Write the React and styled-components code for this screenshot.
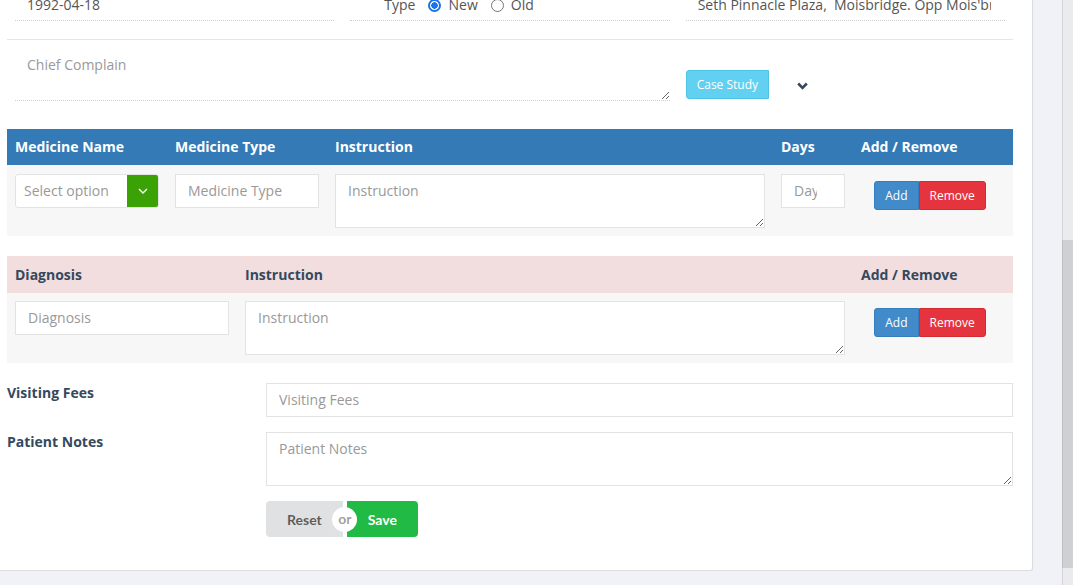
import styled, { createGlobalStyle } from "styled-components";

const GlobalStyle = createGlobalStyle`
    html, body {
        margin: 0;
        padding: 0;
        background: #f0f2f7;
        overflow: hidden;
        font-family: "Open Sans", "Liberation Sans", sans-serif;
    }
    * { box-sizing: border-box; }
`;

export default function App() {
    return (
        <>
            <GlobalStyle />
            <Viewport>
                <Main>
                    <Card>
                        <TopRow>
                            <Col>
                                <LineField>1992-04-18</LineField>
                            </Col>
                            <Col>
                                <LineField $indent="34px">
                                    <span>Type</span>
                                    <Radio $checked />
                                    <span>New</span>
                                    <Radio />
                                    <span>Old</span>
                                </LineField>
                            </Col>
                            <Col>
                                <LineField>
                                    <FieldText>Seth Pinnacle Plaza,&nbsp; Moisbridge. Opp Mois'bridge Road</FieldText>
                                </LineField>
                            </Col>
                        </TopRow>

                        <ComplainRow>
                            <ComplainCol>
                                <LineArea placeholder="Chief Complain" />
                            </ComplainCol>
                            <CaseCol>
                                <CaseButton>Case Study</CaseButton>
                                <DropToggle>
                                    <svg width="11" height="8" viewBox="0 0 11 8">
                                        <path d="M1.2 1.5 L5.5 5.8 L9.8 1.5" fill="none" stroke="#34495e" strokeWidth="2.6" />
                                    </svg>
                                </DropToggle>
                            </CaseCol>
                        </ComplainRow>

                        <Table>
                            <colgroup>
                                <col style={{ width: 160 }} />
                                <col style={{ width: 160 }} />
                                <col />
                                <col style={{ width: 80 }} />
                                <col style={{ width: 160 }} />
                            </colgroup>
                            <thead>
                                <HeadRow $tone="blue">
                                    <th>Medicine Name</th>
                                    <th>Medicine Type</th>
                                    <th>Instruction</th>
                                    <th>Days</th>
                                    <th>Add / Remove</th>
                                </HeadRow>
                            </thead>
                            <tbody>
                                <BodyRow $top="9px">
                                    <td>
                                        <SelectBox>
                                            <SelectText>Select option</SelectText>
                                            <SelectArrow>
                                                <svg width="10" height="6" viewBox="0 0 10 6">
                                                    <path d="M1 1 L5 5 L9 1" fill="none" stroke="#fff" strokeWidth="1.4" />
                                                </svg>
                                            </SelectArrow>
                                        </SelectBox>
                                    </td>
                                    <td><Input placeholder="Medicine Type" /></td>
                                    <td><Area placeholder="Instruction" /></td>
                                    <td><Input placeholder="Days" $padRight="27px" /></td>
                                    <ActionCell>
                                        <BtnGroup>
                                            <SmallBtn $kind="add">Add</SmallBtn>
                                            <SmallBtn $kind="remove">Remove</SmallBtn>
                                        </BtnGroup>
                                    </ActionCell>
                                </BodyRow>
                            </tbody>
                        </Table>

                        <Table $gap="20px">
                            <colgroup>
                                <col style={{ width: 230 }} />
                                <col />
                                <col style={{ width: 160 }} />
                            </colgroup>
                            <thead>
                                <HeadRow $tone="pink">
                                    <th>Diagnosis</th>
                                    <th>Instruction</th>
                                    <th>Add / Remove</th>
                                </HeadRow>
                            </thead>
                            <tbody>
                                <BodyRow>
                                    <td><Input placeholder="Diagnosis" /></td>
                                    <td><Area placeholder="Instruction" /></td>
                                    <ActionCell $top="15px">
                                        <BtnGroup>
                                            <SmallBtn $kind="add">Add</SmallBtn>
                                            <SmallBtn $kind="remove">Remove</SmallBtn>
                                        </BtnGroup>
                                    </ActionCell>
                                </BodyRow>
                            </tbody>
                        </Table>

                        <FormGrid>
                            <Label>Visiting Fees</Label>
                            <Input placeholder="Visiting Fees" />
                            <Label>Patient Notes</Label>
                            <Area placeholder="Patient Notes" />
                            <span />
                            <ActionBar>
                                <BigBtn $kind="reset">Reset</BigBtn>
                                <Or><span>or</span></Or>
                                <BigBtn $kind="save">Save</BigBtn>
                            </ActionBar>
                        </FormGrid>
                    </Card>
                </Main>
                <ScrollTrack>
                    <ScrollThumb />
                </ScrollTrack>
            </Viewport>
        </>
    );
}

const Viewport = styled.div`
    display: flex;
    height: 585px;
    overflow: hidden;
`;

const Main = styled.div`
    flex: 1;
    padding-right: 29px;
`;

const Card = styled.div`
    margin-top: -5px;
    background: #fff;
    border-right: 1px solid #dcdcdc;
    border-bottom: 1px solid #dcdcdc;
    border-bottom-right-radius: 3px;
    padding: 0 19px 33px 7px;
`;

const TopRow = styled.div`
    display: grid;
    grid-template-columns: repeat(3, 1fr);
    padding-bottom: 18px;
    border-bottom: 1px solid #e5e5e5;
`;

const Col = styled.div`
    padding: 0 8px;
    min-width: 0;
`;

const LineField = styled.div`
    display: flex;
    align-items: center;
    gap: 7px;
    font-size: 14px;
    line-height: 20px;
    color: #555;
    padding: 0 12px 5px ${(p) => p.$indent || "12px"};
    border-bottom: 1px dotted #cfcfcf;
    white-space: nowrap;

    span { margin-right: 2px; }
`;

const FieldText = styled.span`
    flex: 1;
    min-width: 0;
    overflow: hidden;
`;

const Radio = styled.i`
    width: 13px;
    height: 13px;
    border-radius: 50%;
    flex: none;
    margin-left: 4px;
    border: ${(p) => (p.$checked ? "2px solid #1a73e8" : "1px solid #767676")};
    background: ${(p) => (p.$checked ? "radial-gradient(circle, #1a73e8 0 3px, #fff 3.5px)" : "#fff")};
`;

const ComplainRow = styled.div`
    display: grid;
    grid-template-columns: 2fr 1fr;
    margin-top: 7px;
`;

const ComplainCol = styled.div`
    padding: 0 8px;
`;

const LineArea = styled.textarea`
    display: block;
    width: 100%;
    height: 54px;
    border: none;
    border-bottom: 1px dotted #cfcfcf;
    padding: 8px 12px 6px;
    font-family: inherit;
    font-size: 14px;
    line-height: 20px;
    color: #555;
    outline: none;

    &::placeholder { color: #999; }
`;

const CaseCol = styled.div`
    display: flex;
    align-items: center;
    padding: 23px 8px 0;
    align-self: start;
`;

const CaseButton = styled.button`
    height: 29px;
    padding: 0 10px;
    background: #62d0f1;
    border: 1px solid #4fc3e6;
    border-radius: 3px 0 0 3px;
    color: #fff;
    font-family: inherit;
    font-size: 12px;
`;

const DropToggle = styled.span`
    display: flex;
    align-items: center;
    margin-left: 28px;
    padding-top: 2px;
`;

const Table = styled.table`
    width: 100%;
    table-layout: fixed;
    border-collapse: collapse;
    margin-top: ${(p) => p.$gap || "28px"};
`;

const HeadRow = styled.tr`
    background: ${(p) => (p.$tone === "blue" ? "#337ab7" : "#f2dede")};

    th {
        text-align: left;
        padding: 8px;
        height: ${(p) => (p.$tone === "blue" ? "36px" : "37px")};
        font-size: 14px;
        line-height: 20px;
        font-weight: 700;
        color: ${(p) => (p.$tone === "blue" ? "#fff" : "#34495e")};
        white-space: nowrap;
    }
`;

const BodyRow = styled.tr`
    background: #f7f7f7;

    td {
        padding: ${(p) => p.$top || "8px"} 8px 8px;
        vertical-align: top;
    }
`;

const ActionCell = styled.td`
    && { padding-top: ${(p) => p.$top || "16px"}; text-align: center; }
`;

const Input = styled.input`
    display: block;
    width: 100%;
    height: 34px;
    border: 1px solid #e3e3e3;
    background: #fff;
    padding: 5px ${(p) => p.$padRight || "12px"} 7px 12px;
    font-family: inherit;
    font-size: 14px;
    line-height: 20px;
    color: #555;
    outline: none;

    &::placeholder { color: #999; }
`;

const Area = styled.textarea`
    display: block;
    width: 100%;
    height: 54px;
    border: 1px solid #e3e3e3;
    background: #fff;
    padding: 6px 12px;
    font-family: inherit;
    font-size: 14px;
    line-height: 20px;
    color: #555;
    outline: none;

    &::placeholder { color: #999; }
`;

const SelectBox = styled.div`
    display: flex;
    height: 34px;
    border: 1px solid #e3e3e3;
    border-radius: 3px;
    background: #fff;
    overflow: hidden;
`;

const SelectText = styled.span`
    flex: 1;
    padding-left: 8px;
    font-size: 14px;
    line-height: 32px;
    color: #999;
`;

const SelectArrow = styled.span`
    width: 32px;
    display: flex;
    align-items: center;
    justify-content: center;
    background: #3aa204;
    margin: -1px -1px -1px 0;
`;

const BtnGroup = styled.div`
    display: inline-flex;
    margin-left: -6px;
`;

const SmallBtn = styled.button`
    height: 29px;
    padding: 0 10px;
    font-family: inherit;
    font-size: 12px;
    color: #fff;
    border: 1px solid ${(p) => (p.$kind === "add" ? "#357ebd" : "#d42a33")};
    background: ${(p) => (p.$kind === "add" ? "#428bca" : "#e5343d")};
    border-radius: ${(p) => (p.$kind === "add" ? "3px 0 0 3px" : "0 3px 3px 0")};
`;

const FormGrid = styled.div`
    display: grid;
    grid-template-columns: 259px 1fr;
    row-gap: 15px;
    margin-top: 20px;
`;

const Label = styled.div`
    font-size: 14px;
    line-height: 20px;
    font-weight: 700;
    color: #34495e;
`;

const ActionBar = styled.div`
    display: flex;
    align-items: center;
`;

const BigBtn = styled.button`
    height: 36px;
    padding: 0 21px;
    border: none;
    font-family: Lato, "Open Sans", sans-serif;
    font-weight: 700;
    font-size: 14px;
    color: ${(p) => (p.$kind === "save" ? "#fff" : "rgba(0,0,0,0.6)")};
    background: ${(p) => (p.$kind === "save" ? "#21ba45" : "#e0e1e2")};
    border-radius: ${(p) => (p.$kind === "save" ? "0 4px 4px 0" : "4px 0 0 4px")};
`;

const Or = styled.div`
    width: 4px;
    height: 36px;
    position: relative;
    z-index: 1;
    display: flex;
    align-items: center;
    justify-content: center;

    span {
        flex: none;
        width: 25px;
        height: 25px;
        border-radius: 50%;
        background: #fff;
        font-family: Lato, "Open Sans", sans-serif;
        font-weight: 700;
        font-size: 14px;
        line-height: 24px;
        text-align: center;
        color: rgba(0,0,0,0.4);
    }
`;

const ScrollTrack = styled.div`
    width: 11px;
    background: #ebebee;
    border-left: 1px solid #d4d4d8;
    padding-top: 240px;
`;

const ScrollThumb = styled.div`
    height: 328px;
    background: #cfcfd4;
    border-left: 1px solid #bdbdc2;
    margin-left: -1px;
`;
